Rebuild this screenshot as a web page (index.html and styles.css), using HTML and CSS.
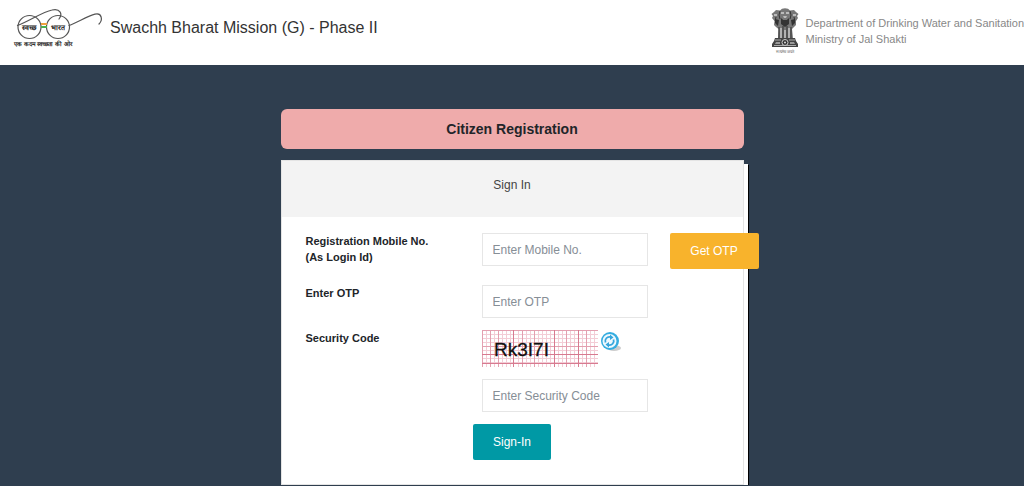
FILE: index.html
```html
<!DOCTYPE html>
<html lang="en">
<head>
    <meta charset="UTF-8">
    <meta name="viewport" content="width=device-width, initial-scale=1.0">
    <title>Swachh Bharat Mission (G) - Citizen Registration</title>
    <link rel="stylesheet" href="styles.css">
</head>
<body>

    <header class="site-header">
        <a class="brand" href="#">
            <svg class="brand-logo" width="92" height="44" viewBox="0 0 92 44" role="img" aria-label="Swachh Bharat">
                <g fill="none" stroke="#555" stroke-width="1.2" stroke-linecap="round">
                    <circle cx="17.5" cy="19" r="11.5"/>
                    <circle cx="46" cy="19" r="11.5"/>
                    <path d="M5.500 17.500 C18 13 30 4 40 2 C48 0 51 6 47 11"/>
                    <path d="M57 17.500 C66 14 76 8 83 6.200 C90 4.500 91 12 87 16"/>
                </g>
                <rect x="29" y="15" width="6" height="2" fill="#f0a03c"/>
                <rect x="29" y="18" width="6" height="2" fill="#4caf50"/>
                <text class="logo-word" x="17" y="22">स्वच्छ</text>
                <text class="logo-word" x="46" y="22">भारत</text>
                <text class="logo-tagline" x="31" y="38">एक कदम स्वच्छता की ओर</text>
            </svg>
            <span class="brand-title">Swachh Bharat Mission (G) - Phase II</span>
        </a>
        <div class="ministry">
            <svg class="emblem" width="30" height="46" viewBox="0 0 30 46" role="img" aria-label="State Emblem of India">
                <!-- lions -->
                <path fill="#777" d="M10 2.500 L12 .8 L15 .3 L18 .8 L20 2.500 L24 2 L26 4 L28.500 6 L27 8 L28 10 L26 13 L26 17 L24 19 L22 21 L23 30 H8 L8.500 21 L6 19 L4 17 L4.500 13 L2 10 L3 8 L1.500 6 L4 4 L6 2Z"/>
                <path fill="#333" d="M5 11 L9 12 L8 18 L5 15Z M25 11 L21 12 L22 18 L25 15Z M11 10 L13 12 H17 L19 10 L19 16 L15 19 L11 16Z"/>
                <path fill="#bbb" d="M11 4 H14 V6 H11Z M16 4 H19 V6 H16Z M13 8 H17 L16 10 H14Z M4 6 H7 V8 H4Z M23 6 H26 V8 H23Z"/>
                <path fill="none" stroke="#333" d="M10 3 Q8 7 10 11 M20 3 Q22 7 20 11 M12 12 Q15 15 18 12 M6 9 Q4 12 7 16 M24 9 Q26 12 23 16"/>
                <path fill="none" stroke="#eee" d="M11 20 V30 M15 22 V30 M19 20 V30"/>
                <path fill="none" stroke="#333" d="M9 19 V30 M13 18 V30 M17 18 V30 M21 19 V30"/>
                <!-- abacus -->
                <path fill="#444" d="M5 30 H25 L26 33 L28 36 V39 H2 V36 L4 33Z"/>
                <path fill="none" stroke="#aaa" d="M5 32 H11 M19 32 H25 M4 37.500 H26"/>
                <path fill="#999" d="M6 34 H10 V36 H5Z M20 34 H24 L25 36 H20Z"/>
                <circle cx="15" cy="34.500" r="3" fill="#333" stroke="#ccc"/>
                <circle cx="15" cy="34.500" r="1" fill="#ddd"/>
                <text class="emblem-motto" x="15" y="45">सत्यमेव जयते</text>
            </svg>
            <p class="ministry-name">Department of Drinking Water and Sanitation<br>Ministry of Jal Shakti</p>
        </div>
    </header>

    <main class="page">
        <h1 class="page-title">Citizen Registration</h1>

        <section class="card">
            <h2 class="card-header">Sign In</h2>
            <form class="card-body">
                <div class="form-row form-row-mobile">
                    <label for="mobile">Registration Mobile No.<br>(As Login Id)</label>
                    <input class="field" type="tel" id="mobile" placeholder="Enter Mobile No.">
                    <button class="btn btn-otp" type="button">Get OTP</button>
                </div>
                <div class="form-row">
                    <label for="otp">Enter OTP</label>
                    <input class="field" type="text" id="otp" placeholder="Enter OTP">
                </div>
                <div class="form-row">
                    <label for="code">Security Code</label>
                    <div class="captcha">
                        <svg class="captcha-code" width="116" height="37" viewBox="0 0 116 37">
                            <path fill="none" stroke="#f3cdd6" d="M4.500 0V37 M12.500 0V37 M20.500 0V37 M24.500 0V37 M28.500 0V37 M36.500 0V37 M44.500 0V37 M48.500 0V37 M56.500 0V37 M60.500 0V37 M64.500 0V37 M68.500 0V37 M76.500 0V37 M80.500 0V37 M88.500 0V37 M92.500 0V37 M100.500 0V37 M108.500 0V37 M112.500 0V37 M0 4.500H116 M0 8.500H116 M0 12.500H116 M0 20.500H116 M0 28.500H116 M0 32.500H116"/>
                            <path fill="none" stroke="#e3a0b0" d="M.5 0V37 M8.500 0V37 M16.500 0V37 M40.500 0V37 M52.500 0V37 M84.500 0V37 M104.500 0V37 M0 .5H116 M0 16.500H116 M0 24.500H116"/>
                            <path fill="none" stroke="#d77a90" d="M31.500 0V37 M72.500 0V37 M96.500 0V37 M0 24.500H116 M0 33.500H116"/>
                            <text class="captcha-text" x="12" y="26">Rk3I7I</text>
                        </svg>
                        <button class="refresh" type="button" aria-label="Refresh security code">
                            <svg width="22" height="22" viewBox="0 0 22 22">
                                <ellipse cx="14" cy="18" rx="7" ry="3" fill="#ccc"/>
                                <circle cx="10" cy="11" r="9" fill="#35ade0"/>
                                <circle cx="9.500" cy="11" r="7" fill="#eef9fe"/>
                                <path fill="none" stroke="#35a5dc" stroke-width="1.800" d="M5.500 12.500 A4.200 4.200 0 0 1 10.500 7 M13.500 9.500 A4.200 4.200 0 0 1 8.500 15"/>
                                <path fill="#35a5dc" d="M10 4.500 L13.500 7.500 L10 10Z M9 12 L5.500 14.500 L9 17.500Z"/>
                            </svg>
                        </button>
                    </div>
                </div>
                <div class="form-row">
                    <input class="field field-code" type="text" id="code" placeholder="Enter Security Code">
                </div>
                <button class="btn btn-signin" type="submit">Sign-In</button>
            </form>
        </section>
    </main>

</body>
</html>
```
FILE: styles.css
```css
* {
    box-sizing: border-box;
}

body {
    margin: 0;
    font-family: "Liberation Sans", Arial, sans-serif;
    font-size: 12px;
    line-height: 16px;
    color: #212529;
    background-color: #2f3e4f;
}

.site-header {
    display: flex;
    justify-content: space-between;
    align-items: flex-start;
    min-height: 65px;
    padding: 8px 0 8px 12px;
    background-color: #fff;
}

.brand {
    display: flex;
    gap: 6px;
    color: #333;
    text-decoration: none;
}

.brand-title {
    padding-top: 8px;
    font-size: 16px;
    line-height: 24px;
}

.logo-word,
.logo-tagline {
    font-size: 7px;
    font-weight: bold;
    text-anchor: middle;
    fill: #222;
}

.logo-tagline {
    font-size: 6px;
}

.ministry {
    display: flex;
    gap: 6px;
}

.emblem-motto {
    font-size: 4px;
    text-anchor: middle;
    fill: #555;
}

.ministry-name {
    margin: 0;
    padding-top: 7px;
    font-size: 11px;
    color: #888;
}

.page {
    width: 463px;
    max-width: 100%;
    margin: 0 auto;
    padding: 44px 0 0;
}

.page-title {
    margin: 0 0 11px;
    padding: 8px;
    border-radius: 6px;
    font-size: 14px;
    line-height: 24px;
    text-align: center;
    background-color: #efabab;
}

.card {
    border: 1px solid #e4e4e4;
    background-color: #fff;
    box-shadow: 4px 4px 0 #fff, 5px 5px 0 #000;
}

.card-header {
    margin: 0;
    padding: 16px 16px 24px;
    font-size: 12px;
    font-weight: normal;
    line-height: 16px;
    text-align: center;
    color: #444;
    background-color: #f3f3f3;
}

.card-body {
    display: flex;
    flex-direction: column;
    gap: 12px;
    padding: 16px 24px 24px;
}

.form-row {
    display: grid;
    grid-template-columns: 176px 166px auto;
    align-items: start;
}

.form-row-mobile {
    min-height: 40px;
}

label {
    font-size: 11px;
    font-weight: bold;
}

.field {
    width: 100%;
    height: 33px;
    padding: 0 10px;
    border: 1px solid #e6e6e6;
    font: inherit;
}

.field::placeholder {
    color: #868e96;
}

.field-code {
    grid-column: 2;
}

.btn {
    height: 36px;
    padding: 0 20px;
    border: 0;
    border-radius: 2px;
    font: inherit;
    color: #fff;
    cursor: pointer;
}

.btn-otp {
    width: 89px;
    margin-left: 22px;
    background-color: #f8b32c;
}

.btn-signin {
    align-self: center;
    background-color: #0099a5;
}

.captcha {
    display: flex;
    align-items: flex-start;
    gap: 2px;
}

.captcha-text {
    font-size: 19px;
    fill: #111;
    stroke: #111;
    stroke-width: 0.3;
}

.refresh {
    padding: 0;
    border: 0;
    background: none;
    cursor: pointer;
}
```
